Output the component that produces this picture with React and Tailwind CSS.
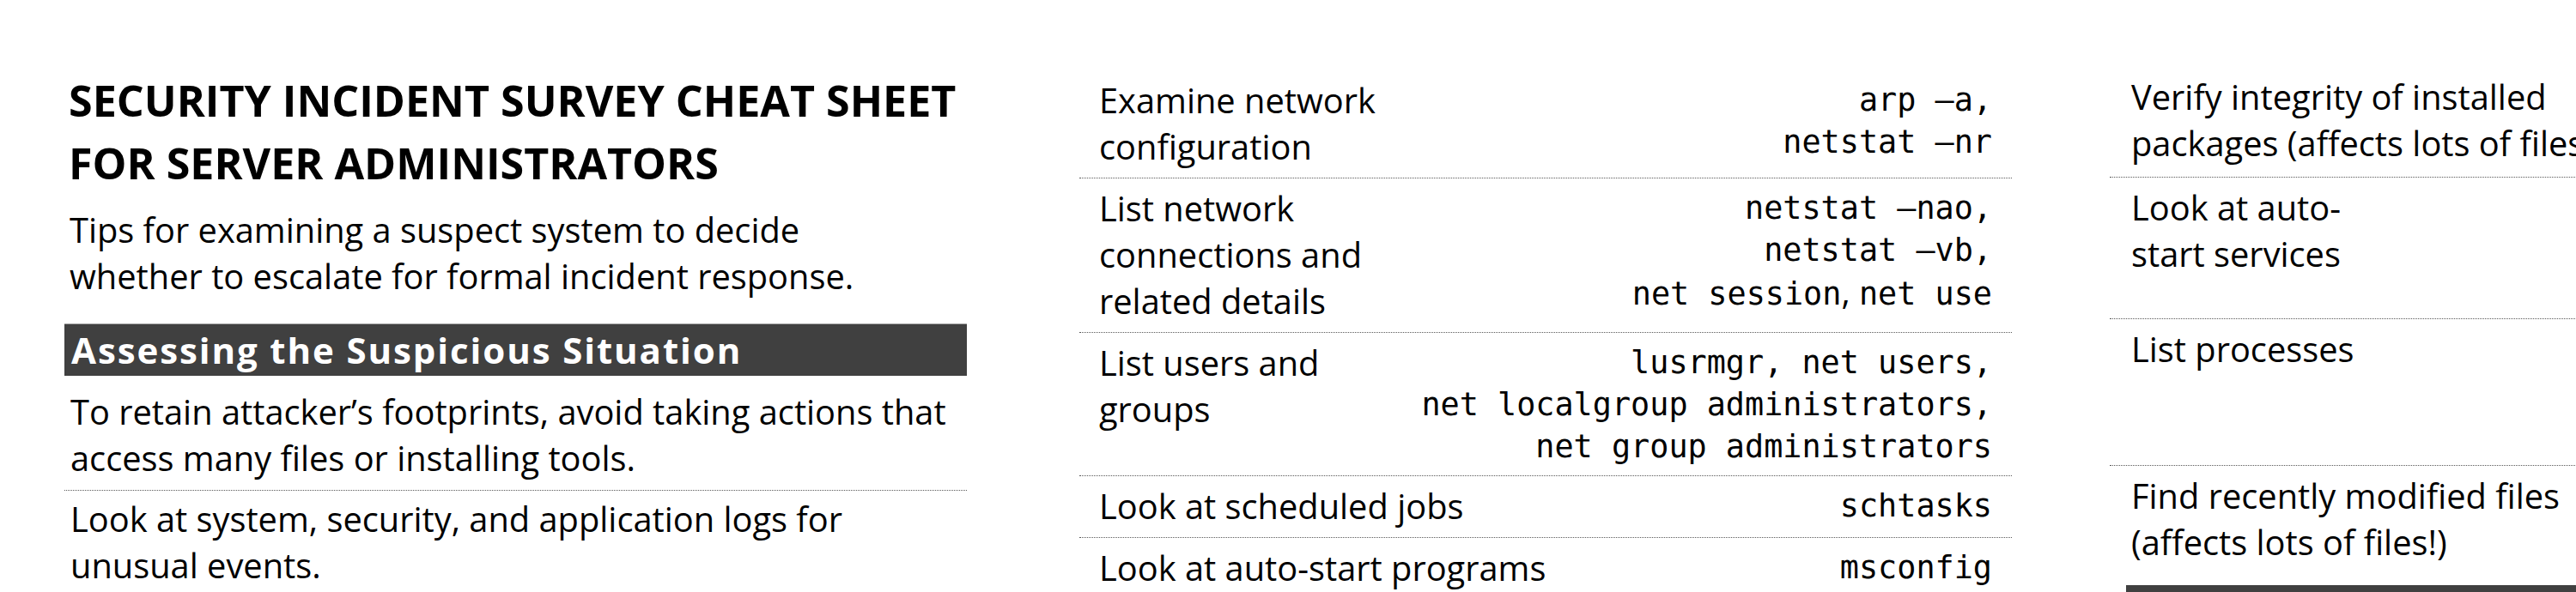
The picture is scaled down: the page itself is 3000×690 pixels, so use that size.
import React from 'react';

const mono = "font-['DejaVu_Sans_Mono',monospace] text-[36.8px] leading-[49px]";
const dots = 'border-b border-dotted border-[#595959]';

const commandRows = [
    { task: ['Examine network', 'configuration'], cmds: ['arp –a,', 'netstat –nr'] },
    { task: ['List network', 'connections and', 'related details'], cmds: ['netstat –nao,', 'netstat –vb,', 'SESSION'] },
    { task: ['List users and', 'groups'], cmds: ['lusrmgr, net users,', 'net localgroup administrators,', 'net group administrators'] },
    { task: ['Look at scheduled jobs'], cmds: ['schtasks'] },
    { task: ['Look at auto-start programs'], cmds: ['msconfig'], last: true },
];

const rightRows = [
    { task: ['Verify integrity of installed', 'packages (affects lots of files!)'], h: 'h-[129px]' },
    { task: ['Look at auto-', 'start services'], h: 'h-[165px]' },
    { task: ['List processes'], h: 'h-[171px]' },
    { task: ['Find recently modified files', '(affects lots of files!)'], h: 'h-[139px]', last: true },
];

const Lines = ({ lines }) => (
    <div className="text-[39.8px] leading-[54px] whitespace-nowrap">
        {lines.map((l) => <div key={l}>{l}</div>)}
    </div>
);

const Cmd = ({ text }) => {
    if (text === 'SESSION') {
        return (
            <div>
                net session<span className="font-['Open_Sans',sans-serif] text-[39.5px]">, </span>net use
            </div>
        );
    }
    return <div>{text}</div>;
};

const App = () => {
    return (
        <div className="w-[3000px] h-[690px] overflow-hidden bg-white flex pl-[75px] font-['Open_Sans',sans-serif] text-black">

            {/* left column */}
            <div className="w-[1051px] shrink-0 pt-[80px]">
                <h1 className="pl-[5px] text-[50.2px] leading-[73px] font-bold whitespace-nowrap">
                    <div>SECURITY INCIDENT SURVEY CHEAT SHEET</div>
                    <div>FOR SERVER ADMINISTRATORS</div>
                </h1>
                <div className="pl-[6px] mt-[15px]">
                    <Lines lines={['Tips for examining a suspect system to decide', 'whether to escalate for formal incident response.']} />
                </div>
                <div className="mt-[28px] h-[61px] bg-[#404040] border-t border-[#a6a6a6] pl-[8px] text-white font-bold text-[42px] leading-[60px] tracking-[1.9px] whitespace-nowrap">
                    Assessing the Suspicious Situation
                </div>
                <div className={`pl-[7px] pt-[15px] pb-[10px] ${dots}`}>
                    <Lines lines={['To retain attacker’s footprints, avoid taking actions that', 'access many files or installing tools.']} />
                </div>
                <div className="pl-[7px] pt-[6px]">
                    <Lines lines={['Look at system, security, and application logs for', 'unusual events.']} />
                </div>
            </div>

            {/* middle column */}
            <div className="ml-[131px] w-[1086px] shrink-0 pt-[82px]">
                {commandRows.map((row, i) => (
                    <div
                        key={i}
                        className={`flex justify-between pl-[23px] pr-[23px] pt-[8px] pb-[9px] ${row.last ? '' : dots}`}
                    >
                        <Lines lines={row.task} />
                        <div className={`${mono} text-right whitespace-nowrap mt-[2px]`}>
                            {row.cmds.map((c) => <Cmd key={c} text={c} />)}
                        </div>
                    </div>
                ))}
            </div>

            {/* right column, runs off the page edge */}
            <div className="ml-[114px] w-[1086px] shrink-0 pt-[78px]">
                {rightRows.map((row, i) => (
                    <div
                        key={i}
                        className={`${row.h} pl-[25px] pt-[8px] ${row.last ? '' : dots}`}
                    >
                        <Lines lines={row.task} />
                    </div>
                ))}
                <div className="ml-[19px] h-[61px] bg-[#404040]"></div>
            </div>
        </div>
    );
};

export default App;
